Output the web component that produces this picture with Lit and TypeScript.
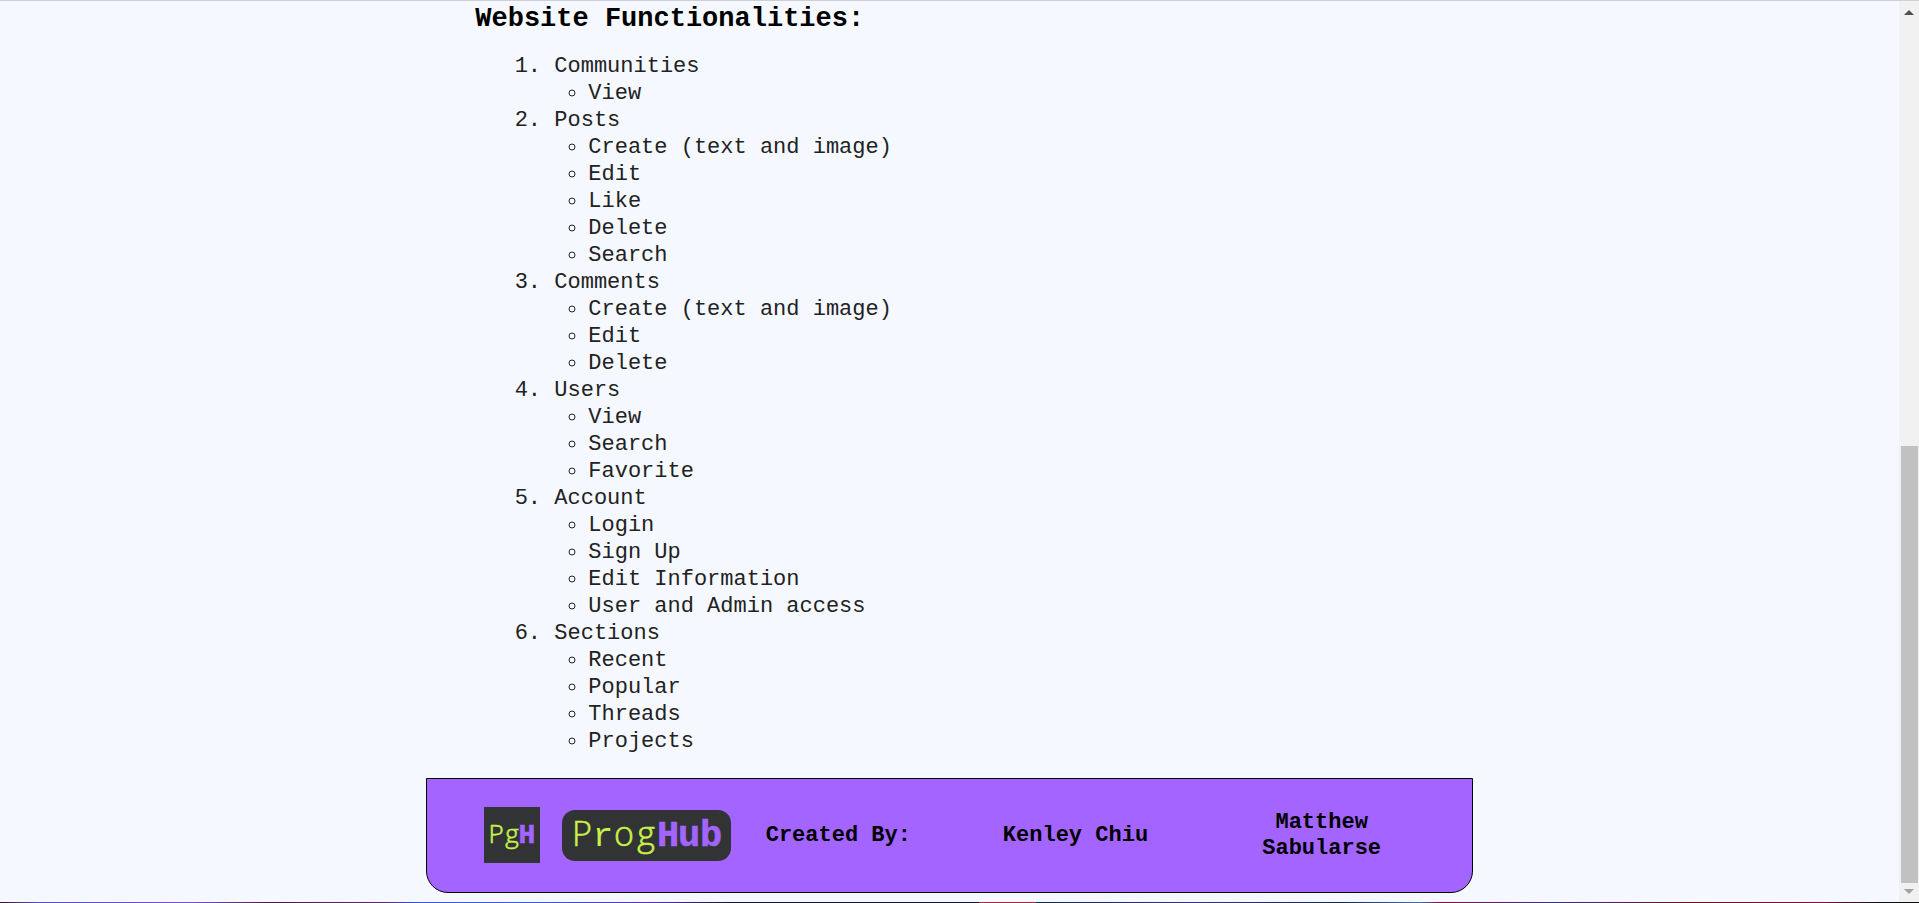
import { LitElement, html, css } from "lit";
import { customElement } from "lit/decorators.js";

const features: { name: string; actions: string[] }[] = [
  { name: "Communities", actions: ["View"] },
  { name: "Posts", actions: ["Create (text and image)", "Edit", "Like", "Delete", "Search"] },
  { name: "Comments", actions: ["Create (text and image)", "Edit", "Delete"] },
  { name: "Users", actions: ["View", "Search", "Favorite"] },
  { name: "Account", actions: ["Login", "Sign Up", "Edit Information", "User and Admin access"] },
  { name: "Sections", actions: ["Recent", "Popular", "Threads", "Projects"] },
];

@customElement("feature-list")
class FeatureList extends LitElement {
  static styles = css`
    :host { display: block; padding: 0 48px; }
    h2 { margin: 0 0 18px; font-size: 27px; line-height: 32px; }
    ol { margin: 0; padding-left: 79px; color: #222; }
    ul { margin: 0; padding-left: 34px; list-style: circle; }
  `;
  render() {
    return html`
      <h2>Website Functionalities:</h2>
      <ol>
        ${features.map((f) => html`<li>${f.name}<ul>${f.actions.map((a) => html`<li>${a}</li>`)}</ul></li>`)}
      </ol>
    `;
  }
}

@customElement("site-footer")
class SiteFooter extends LitElement {
  static styles = css`
    :host { display: block; }
    footer {
      display: grid;
      grid-template-columns: 56px 169px 170fr 260fr 188fr;
      gap: 22px;
      align-items: center;
      padding: 28px 56px 29px 57px;
      border: 1px solid #000;
      border-radius: 0 0 22px 22px;
      background: #a364ff;
      font-weight: bold;
      line-height: 26px;
      text-align: center;
    }
    span { padding-top: 2px; }
    svg { display: block; }
    .slab { font-family: "Liberation Mono", monospace; font-weight: normal; }
    .light { font-family: "Open Sans", sans-serif; font-weight: 300; stroke: #c8f04a; stroke-width: 0.6; }
    .lime { fill: #c8f04a; }
    .violet { fill: #a364ff; stroke: #a364ff; stroke-width: 0.6; font-family: "Liberation Mono", monospace; font-weight: bold; }
  `;
  render() {
    return html`
      <footer>
        <svg width="56" height="56" viewBox="0 0 56 56" role="img" aria-label="PgH">
          <rect width="56" height="56" fill="#313335" />
          <text y="36" font-size="26" text-anchor="middle"><tspan class="light lime" x="12">P</tspan><tspan class="light lime" x="28">g</tspan><tspan class="violet" x="43" font-size="28">H</tspan></text>
        </svg>
        <svg width="169" height="51" viewBox="0 0 169 51" role="img" aria-label="ProgHub">
          <rect width="169" height="51" rx="13" fill="#313335" />
          <text y="36" font-size="34" text-anchor="middle"><tspan class="light lime" x="20">P</tspan><tspan class="slab lime" x="41">r</tspan><tspan class="light lime" x="62">o</tspan><tspan class="light lime" x="84">g</tspan><tspan class="violet" x="106" font-size="37">H</tspan><tspan class="violet" x="127" font-size="37">u</tspan><tspan class="violet" x="149" font-size="37">b</tspan></text>
        </svg>
        <span>Created By:</span>
        <span>Kenley Chiu</span>
        <span>Matthew Sabularse</span>
      </footer>
    `;
  }
}

@customElement("app-root")
class AppRoot extends LitElement {
  static styles = css`
    :host {
      display: flex;
      flex-direction: column;
      min-height: 100vh;
      background: #f5f9ff;
      color: #000;
      font: 22px/27px "Liberation Mono", "Courier New", monospace;
    }
    .top { height: 1px; background: #cdcfd3; }
    .view { flex: 1; display: grid; grid-template-columns: 1fr 20px; }
    main { width: 55%; margin: 0 auto; padding-top: 2px; display: grid; gap: 23px; align-content: start; border: solid transparent; border-width: 0 1px; }
    .bar { display: flex; flex-direction: column; align-items: center; background: #f1f1f1; padding: 9px 0 8px; }
    .thumb { width: 17px; height: 437px; margin: auto 0 6px; background: #c1c1c1; }
    .bottom {
      height: 1px;
      background: linear-gradient(90deg, #3a1020 0%, #5a50c0 2%, #7a50d0 10%, #4a1a40 14%, #5a2a70 20%, #2f5fe0 22%, #3a60e0 27%, #5a30b0 34%, #14182c 38%, #14182c 51%, #a02840 51%, #a02840 54%, #14284a 54%, #3a3080 62%, #14284a 70%, #4a70b0 74%, #7a1040 75%, #3a3080 81%, #6a1020 88%, #7a1040 95%, #101010 98%);
    }
    site-footer { margin: 0 -1px 8px; }
  `;
  render() {
    return html`
      <div class="top"></div>
      <div class="view">
        <main>
          <feature-list></feature-list>
          <site-footer></site-footer>
        </main>
        <div class="bar" aria-hidden="true">
          <svg width="10" height="5"><path d="M0 5L5 0L10 5Z" fill="#505050" /></svg>
          <div class="thumb"></div>
          <svg width="10" height="5"><path d="M0 0L5 5L10 0Z" fill="#a3a3a3" /></svg>
        </div>
      </div>
      <div class="bottom"></div>
    `;
  }
}
